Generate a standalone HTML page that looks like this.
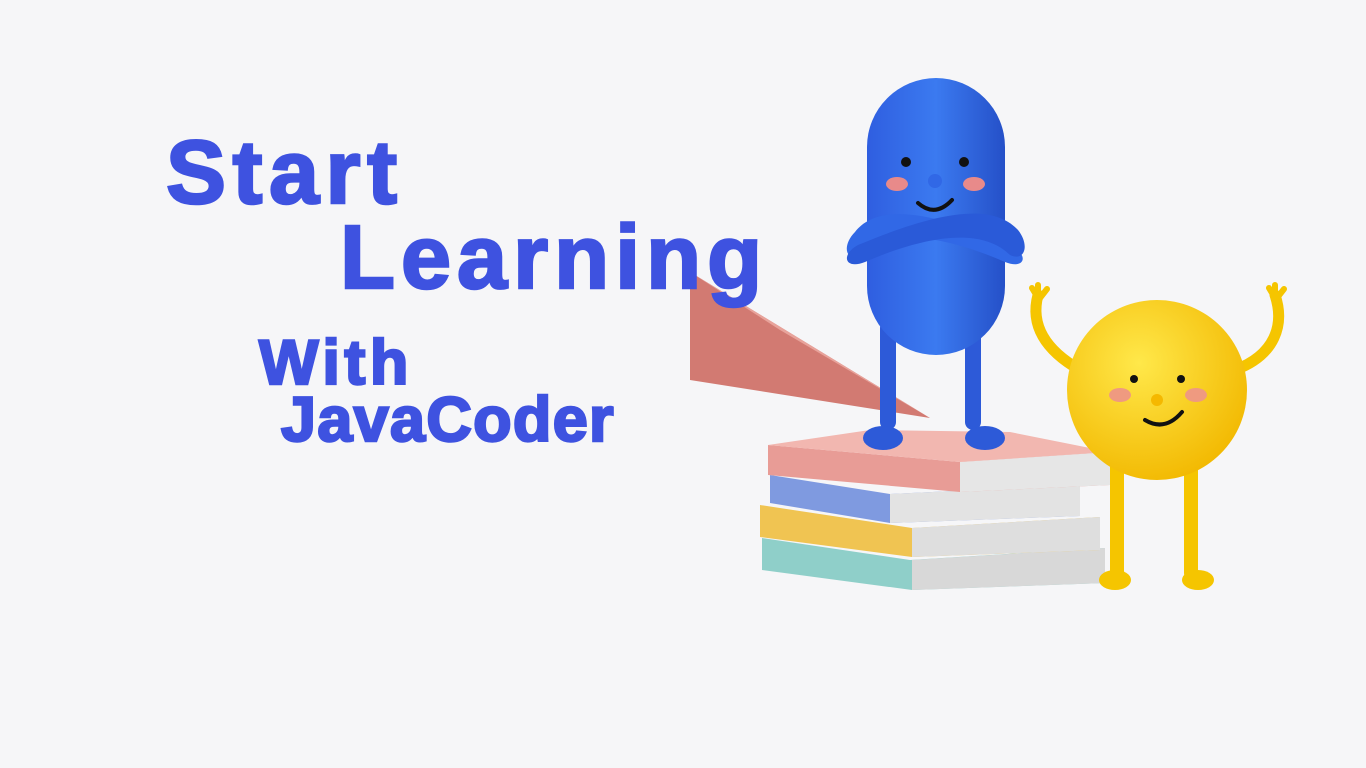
<!DOCTYPE html>
<html><head><meta charset="utf-8"><style>
html,body{margin:0;padding:0;width:1366px;height:768px;overflow:hidden;background:#f6f6f8;}
.t{position:absolute;font-family:"Liberation Sans",sans-serif;font-weight:bold;color:#3e52e0;white-space:nowrap;line-height:1;-webkit-text-stroke:2.5px #3e52e0;z-index:2;}
svg{position:absolute;left:0;top:0;}
</style></head><body>
<svg width="1366" height="768" viewBox="0 0 1366 768">
<defs>
<linearGradient id="bl" x1="0" x2="1"><stop offset="0" stop-color="#2f5ee0"/><stop offset=".5" stop-color="#3b7af0"/><stop offset="1" stop-color="#2550c8"/></linearGradient>
<radialGradient id="yl" cx=".4" cy=".35" r=".7"><stop offset="0" stop-color="#ffe84a"/><stop offset="1" stop-color="#f2b800"/></radialGradient>
</defs>
<polygon points="690,272 930,418 690,380" fill="#d27a72"/>
<polygon points="690,272 930,418 780,330" fill="#e8a39b"/>
<polygon points="762,538 910,560 1105,548 1105,583 912,590 762,570" fill="#8fcfc9"/>
<polygon points="912,560 1105,548 1105,583 912,590" fill="#d8d8d8"/>
<polygon points="760,505 912,528 1100,517 1100,550 912,557 760,537" fill="#f0c452"/>
<polygon points="912,528 1100,517 1100,550 912,557" fill="#dedede"/>
<polygon points="770,475 890,494 1080,485 1080,516 890,523 770,503" fill="#7f9ae0"/>
<polygon points="890,494 1080,485 1080,516 890,523" fill="#e3e3e3"/>
<polygon points="768,445 960,462 1110,452 1110,485 960,492 768,475" fill="#e89c96"/>
<polygon points="960,462 1110,452 1110,485 960,492" fill="#e6e6e6"/>
<polygon points="768,445 870,430 1010,432 1110,452 960,462" fill="#f2b7b0"/>
<rect x="880" y="320" width="16" height="110" rx="8" fill="#2d5ad8"/>
<rect x="965" y="320" width="16" height="110" rx="8" fill="#2d5ad8"/>
<ellipse cx="883" cy="438" rx="20" ry="12" fill="#2d5ad8"/>
<ellipse cx="985" cy="438" rx="20" ry="12" fill="#2d5ad8"/>
<rect x="867" y="78" width="138" height="277" rx="69" fill="url(#bl)"/>
<path d="M855,232 C880,200 940,215 1010,245 C1030,255 1025,270 1005,262 C950,238 890,225 860,255 C845,262 842,245 855,232Z" fill="#3168e6"/>
<path d="M1018,230 C990,200 930,215 858,245 C840,255 845,270 865,262 C920,238 980,225 1010,255 C1025,262 1030,245 1018,230Z" fill="#2a5ad8"/>
<circle cx="906" cy="162" r="5" fill="#111"/><circle cx="964" cy="162" r="5" fill="#111"/>
<ellipse cx="897" cy="184" rx="11" ry="7" fill="#e88a8a"/><ellipse cx="974" cy="184" rx="11" ry="7" fill="#e88a8a"/>
<circle cx="935" cy="181" r="7" fill="#3168e6"/>
<path d="M918,203 Q935,218 952,200" stroke="#111" stroke-width="4" fill="none" stroke-linecap="round"/>
<path d="M1080,370 C1045,350 1030,325 1038,295" stroke="#f5c500" stroke-width="11" fill="none" stroke-linecap="round"/>
<path d="M1038,298 l-6,-10 M1038,296 l0,-11 M1040,298 l7,-9" stroke="#f5c500" stroke-width="6" stroke-linecap="round"/>
<path d="M1235,370 C1275,355 1285,325 1275,295" stroke="#f5c500" stroke-width="11" fill="none" stroke-linecap="round"/>
<path d="M1275,298 l-6,-10 M1275,296 l0,-11 M1277,298 l7,-9" stroke="#f5c500" stroke-width="6" stroke-linecap="round"/>
<rect x="1110" y="460" width="14" height="120" rx="7" fill="#f5c500"/>
<rect x="1184" y="460" width="14" height="120" rx="7" fill="#f5c500"/>
<ellipse cx="1115" cy="580" rx="16" ry="10" fill="#f5c500"/>
<ellipse cx="1198" cy="580" rx="16" ry="10" fill="#f5c500"/>
<circle cx="1157" cy="390" r="90" fill="url(#yl)"/>
<circle cx="1134" cy="379" r="4" fill="#111"/><circle cx="1181" cy="379" r="4" fill="#111"/>
<ellipse cx="1120" cy="395" rx="11" ry="7" fill="#ef9a80"/><ellipse cx="1196" cy="395" rx="11" ry="7" fill="#ef9a80"/>
<circle cx="1157" cy="400" r="6" fill="#f5b800"/>
<path d="M1145,420 Q1165,432 1182,412" stroke="#111" stroke-width="4" fill="none" stroke-linecap="round"/>
</svg>
<div class="t" style="left:166px;top:128px;font-size:90px;letter-spacing:6.5px;">Start</div>
<div class="t" style="left:340px;top:213px;font-size:90px;letter-spacing:6px;">Learning</div>
<div class="t" style="left:259px;top:332px;font-size:63px;letter-spacing:4.5px;">With</div>
<div class="t" style="left:281px;top:389px;font-size:63px;letter-spacing:1.3px;">JavaCoder</div>
</body></html>
